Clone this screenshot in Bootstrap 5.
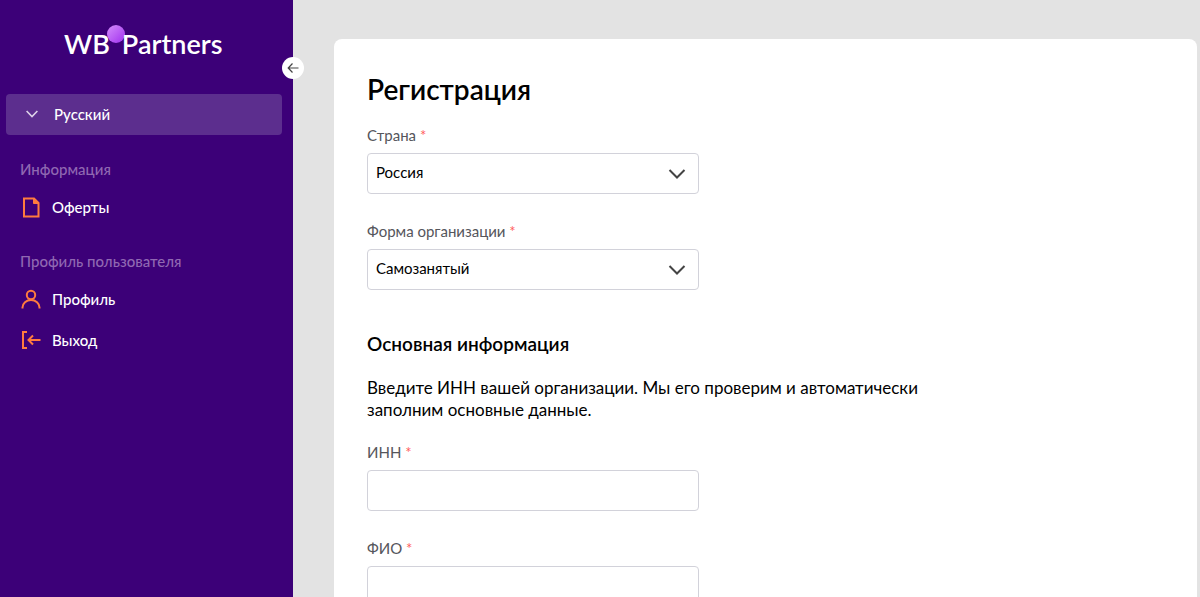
<!DOCTYPE html>
<html lang="ru">
<head>
<meta charset="utf-8">
<meta name="viewport" content="width=device-width, initial-scale=1">
<title>WB Partners — Регистрация</title>
<link href="https://cdn.jsdelivr.net/npm/bootstrap@5.3.0/dist/css/bootstrap.min.css" rel="stylesheet">
<style>
  body { font-family: Lato, "Liberation Sans", sans-serif; font-size: 15px; line-height: 22px; color: #000; background: #e3e3e3; }
  .side { width: 293px; padding: 28px 11px 0 6px; background: #3c0078; color: #fff; }
  .brand { font-size: 27px; line-height: 32px; font-weight: 600; margin: 0 0 34px; padding-left: 58px; color: #fff; }
  .brand-dot { display: inline-block; width: 18px; height: 18px; border-radius: 50%; background: linear-gradient(135deg, #d58dfc, #a030ee); margin: -3px -3px 0 -3px; align-self: flex-start; }
  .collapse-btn { top: 57px; right: -11px; width: 22px; height: 22px; z-index: 2; }
  .lang { height: 41px; padding: 0 20px 2px; gap: 16px; background: #5c2e8e; color: #fff; border-radius: 4px; font-weight: 500; margin-bottom: 23px; }
  .side-title { font-size: 15px; line-height: 22px; font-weight: 500; color: #9068b2; margin: 0 0 6px; padding-left: 14px; }
  .side-link { height: 41px; padding-left: 15px; gap: 11px; color: #fff; font-weight: 500; }
  .side-link:hover { color: #e0c8ff; }
  .side-link svg { stroke: #ff7b3e; fill: none; stroke-width: 2; }
  .side-group { margin-bottom: 23px; }
  main { padding: 39px 3px 40px 41px; scrollbar-width: none; }
  .panel { padding: 34px 33px 40px; border-radius: 8px; }
  h1 { font-size: 28px; line-height: 32px; font-weight: 600; margin: 0 0 20px; }
  h2 { font-size: 19px; line-height: 26px; font-weight: 600; margin: 41px 0 20px; }
  .intro { font-size: 17px; line-height: 22px; max-width: 560px; margin: 0 0 21px; }
  .field { max-width: 332px; }
  .field .form-label { line-height: 20px; color: #55565c; margin-bottom: 8px; }
  .field .form-label span { color: #ff5c5c; }
  .field .form-control, .field .form-select { height: 41px; padding: 0 8px 2px; font-size: 15px; color: #000; border-color: #d2d2da; border-radius: 4px; }
  .field .form-select { background-image: url("data:image/svg+xml,%3Csvg xmlns='http://www.w3.org/2000/svg' viewBox='0 0 18 18'%3E%3Cpath d='M1.5 5l7.5 7.500L16.500 5' fill='none' stroke='%23444' stroke-width='2'/%3E%3C/svg%3E"); background-size: 18px 18px; background-position: right 12px center; }
  .fields { gap: 27px; }
</style>
</head>
<body>
<div class="d-flex vh-100 overflow-hidden">
  <aside class="side position-relative flex-shrink-0">
    <div class="brand d-flex">WB<span class="brand-dot"></span>Partners</div>
    <button type="button" class="collapse-btn btn p-0 bg-white border-0 rounded-circle position-absolute d-flex align-items-center justify-content-center" aria-label="Свернуть меню">
      <svg width="12" height="12" viewBox="0 0 12 12" fill="none" stroke="#444" stroke-width="1.2"><path d="M11.500 6H1.500M5.500 1.500L1.200 6l4.300 4.500"/></svg>
    </button>
    <button type="button" class="lang w-100 border-0 d-flex align-items-center">
      <svg width="12" height="8" viewBox="0 0 12 8" fill="none" stroke="#ddd2e8" stroke-width="1.600"><path d="M.6 1L6 6.500 11.400 1"/></svg>Русский
    </button>
    <nav>
      <div class="side-group">
        <h3 class="side-title">Информация</h3>
        <a href="#" class="side-link d-flex align-items-center text-decoration-none"><svg width="20" height="22" viewBox="0 0 20 22"><path d="M3 2.500H13l4.500 4.500V20.500H3z"/><path d="M12.500 2.500v5h5" fill="#ff7b3e" stroke-width="1"/></svg>Оферты</a>
      </div>
      <h3 class="side-title">Профиль пользователя</h3>
      <a href="#" class="side-link d-flex align-items-center text-decoration-none"><svg width="20" height="20" viewBox="0 0 20 20"><circle cx="10" cy="6" r="4.200"/><path d="M1.500 19.500v-1a8.500 7.500 0 0 1 17 0v1"/></svg>Профиль</a>
      <a href="#" class="side-link d-flex align-items-center text-decoration-none"><svg width="20" height="20" viewBox="0 0 20 20"><path d="M6 2H2v16h4M19.500 10H7.500M12 5.500L7.500 10l4.500 4.500"/></svg>Выход</a>
    </nav>
  </aside>
  <main class="flex-grow-1 overflow-auto">
    <form class="panel bg-white">
      <h1>Регистрация</h1>
      <div class="fields d-flex flex-column">
        <div class="field"><label class="form-label d-block" for="country">Страна <span>*</span></label><select class="form-select" id="country"><option>Россия</option></select></div>
        <div class="field"><label class="form-label d-block" for="orgform">Форма организации <span>*</span></label><select class="form-select" id="orgform"><option>Самозанятый</option></select></div>
      </div>
      <h2>Основная информация</h2>
      <p class="intro">Введите ИНН вашей организации. Мы его проверим и автоматически заполним основные данные.</p>
      <div class="fields d-flex flex-column">
        <div class="field"><label class="form-label d-block" for="inn">ИНН <span>*</span></label><input class="form-control" type="text" id="inn"></div>
        <div class="field"><label class="form-label d-block" for="fio">ФИО <span>*</span></label><input class="form-control" type="text" id="fio"></div>
      </div>
    </form>
  </main>
</div>
<script src="https://cdn.jsdelivr.net/npm/bootstrap@5.3.0/dist/js/bootstrap.bundle.min.js"></script>
</body>
</html>
